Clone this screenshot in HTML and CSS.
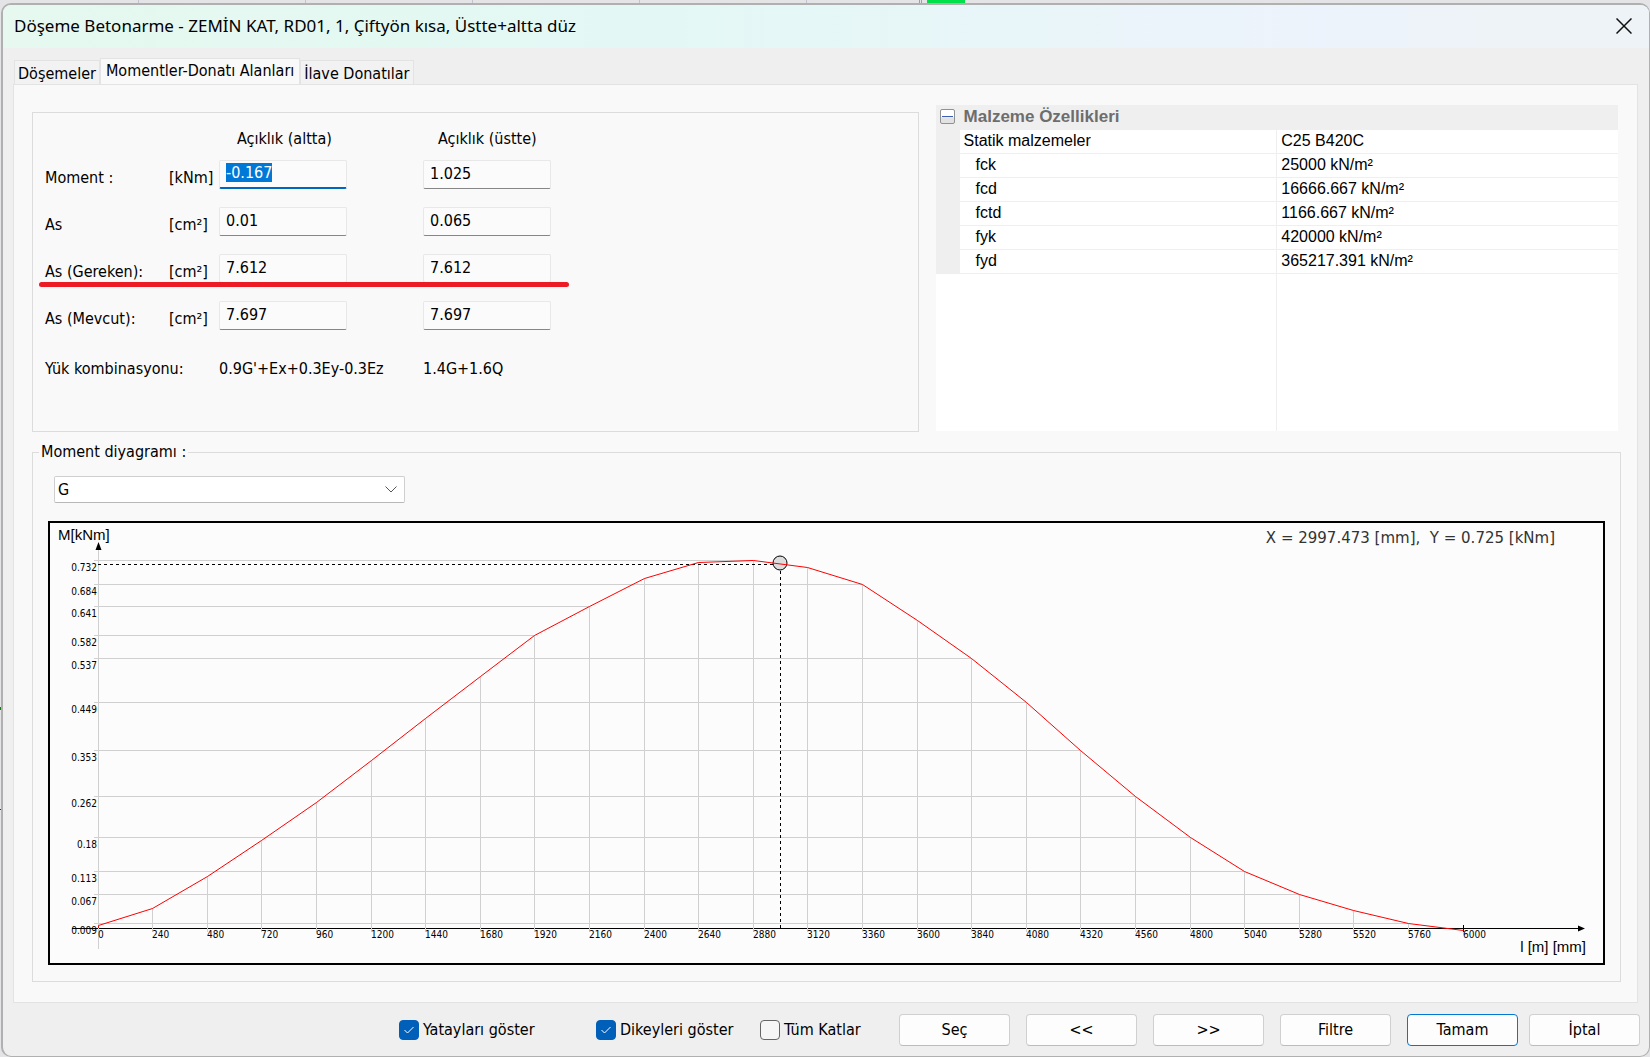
FILE: index.html
```html
<!DOCTYPE html>
<html lang="tr">
<head>
    <meta charset="utf-8">
    <title>Döşeme Betonarme</title>
    <link rel="stylesheet" href="styles.css">
</head>
<body>

<div class="dialog">
    <div class="titlebar">
        <h1>Döşeme Betonarme - ZEMİN KAT, RD01, 1, Çiftyön kısa, Üstte+altta düz</h1>
        <button class="close" aria-label="Kapat">
            <svg width="16" height="16" viewBox="0 0 16 16"><path d="M0.5 0.5L15.5 15.5M15.5 0.5L0.5 15.5"/></svg>
        </button>
    </div>

    <div class="tabs" role="tablist">
        <button class="tab" role="tab">Döşemeler</button>
        <button class="tab active" role="tab" aria-selected="true">Momentler-Donatı Alanları</button>
        <button class="tab" role="tab">İlave Donatılar</button>
    </div>

    <div class="page">
        <div class="top">
            <!-- Moment ve donatı değerleri -->
            <div class="box values">
                <div class="values-row head">
                    <span class="col-altta">Açıklık (altta)</span>
                    <span class="col-ustte">Açıklık (üstte)</span>
                </div>
                <div class="values-row">
                    <label for="moment-altta">Moment :</label>
                    <span>[kNm]</span>
                    <input id="moment-altta" class="focused" type="text" value="-0.167" readonly>
                    <input type="text" value="1.025" aria-label="Moment (üstte)" readonly>
                </div>
                <div class="values-row">
                    <label for="as-altta">As</label>
                    <span>[cm²]</span>
                    <input id="as-altta" type="text" value="0.01" readonly>
                    <input type="text" value="0.065" aria-label="As (üstte)" readonly>
                </div>
                <div class="values-row marked">
                    <label for="gereken-altta">As (Gereken):</label>
                    <span>[cm²]</span>
                    <input id="gereken-altta" type="text" value="7.612" readonly>
                    <input type="text" value="7.612" aria-label="As Gereken (üstte)" readonly>
                </div>
                <div class="values-row">
                    <label for="mevcut-altta">As (Mevcut):</label>
                    <span>[cm²]</span>
                    <input id="mevcut-altta" type="text" value="7.697" readonly>
                    <input type="text" value="7.697" aria-label="As Mevcut (üstte)" readonly>
                </div>
                <div class="values-row combo">
                    <span class="combo-label">Yük kombinasyonu:</span>
                    <span>0.9G'+Ex+0.3Ey-0.3Ez</span>
                    <span>1.4G+1.6Q</span>
                </div>
            </div>

            <!-- Malzeme özellikleri -->
            <table class="props">
                <colgroup>
                    <col class="gutter">
                    <col>
                    <col class="value">
                </colgroup>
                <thead>
                <tr>
                    <th class="toggle-cell">
                        <button class="toggle" aria-label="Daralt"></button>
                    </th>
                    <th colspan="2">Malzeme Özellikleri</th>
                </tr>
                </thead>
                <tbody>
                <tr><td></td><td>Statik malzemeler</td><td>C25 B420C</td></tr>
                <tr class="sub"><td></td><td>fck</td><td>25000 kN/m²</td></tr>
                <tr class="sub"><td></td><td>fcd</td><td>16666.667 kN/m²</td></tr>
                <tr class="sub"><td></td><td>fctd</td><td>1166.667 kN/m²</td></tr>
                <tr class="sub"><td></td><td>fyk</td><td>420000 kN/m²</td></tr>
                <tr class="sub"><td></td><td>fyd</td><td>365217.391 kN/m²</td></tr>
                <tr class="rest"><td></td><td></td><td></td></tr>
                </tbody>
            </table>
        </div>

        <fieldset class="box diagram">
            <legend><label for="yukleme">Moment diyagramı :</label></legend>
            <select id="yukleme">
                <option>G</option>
            </select>

            <svg class="chart" viewBox="0 0 1553 440">
                <!-- yataylar -->
                <path class="grid" d="M44 37.5H703M44 61.5H812M44 83.5H539M44 112.5H484M44 135.5H921M44 179.5H976M44 227.5H1030M44 273.5H1085M44 314.5H1140M44 348.5H1194M44 371.5H1249M44 400.5H1358"/>
                <path class="axis" d="M22 405.5H1530"/>
                <!-- dikeyler -->
                <path class="grid" d="M48.5 26V426M102.5 385V409M157.5 353V409M211.5 317V409M266.5 279V409M321.5 237V409M375.5 195V409M430.5 153V409M484.5 112V409M539.5 83V409M594.5 55V409M648.5 39V409M703.5 37V409M757.5 44V409M812.5 61V409M867.5 97V409M921.5 135V409M976.5 179V409M1030.5 227V409M1085.5 273V409M1140.5 314V409M1194.5 348V409M1249.5 371V409M1303.5 387V409M1358.5 400V409"/>
                <path class="axis" d="M1413.5 402V409"/>
                <path class="arrow" d="M48.5 19L51.5 27H45.5ZM1535 405.5L1528 402.5V408.5Z"/>

                <!-- imleç -->
                <path class="cursor" d="M48 41.5H723M730.5 48V405"/>
                <circle class="marker" cx="730" cy="40" r="7"/>
                <path class="curve" d="M48.5 405V402.5L102.5 385.5L157.5 353.5L211.5 317.5L266.5 279.5L321.5 237.5L375.5 195.5L430.5 153.5L484.5 112.5L539.5 83.5L594.5 55.5L648.5 39.5L703.5 37.5L757.5 44.5L812.5 61.5L867.5 97.5L921.5 135.5L976.5 179.5L1030.5 227.5L1085.5 273.5L1140.5 314.5L1194.5 348.5L1249.5 371.5L1303.5 387.5L1358.5 400.5L1413.5 407.5"/>

                <g class="ticks y">
                    <text x="47" y="48">0.732</text>
                    <text x="47" y="72">0.684</text>
                    <text x="47" y="94">0.641</text>
                    <text x="47" y="123">0.582</text>
                    <text x="47" y="146">0.537</text>
                    <text x="47" y="190">0.449</text>
                    <text x="47" y="238">0.353</text>
                    <text x="47" y="284">0.262</text>
                    <text x="47" y="325">0.18</text>
                    <text x="47" y="359">0.113</text>
                    <text x="47" y="382">0.067</text>
                    <text x="47" y="411">0.009</text>
                </g>
                <g class="ticks">
                    <text x="48" y="415">0</text>
                    <text x="102" y="415">240</text>
                    <text x="157" y="415">480</text>
                    <text x="211" y="415">720</text>
                    <text x="266" y="415">960</text>
                    <text x="321" y="415">1200</text>
                    <text x="375" y="415">1440</text>
                    <text x="430" y="415">1680</text>
                    <text x="484" y="415">1920</text>
                    <text x="539" y="415">2160</text>
                    <text x="594" y="415">2400</text>
                    <text x="648" y="415">2640</text>
                    <text x="703" y="415">2880</text>
                    <text x="757" y="415">3120</text>
                    <text x="812" y="415">3360</text>
                    <text x="867" y="415">3600</text>
                    <text x="921" y="415">3840</text>
                    <text x="976" y="415">4080</text>
                    <text x="1030" y="415">4320</text>
                    <text x="1085" y="415">4560</text>
                    <text x="1140" y="415">4800</text>
                    <text x="1194" y="415">5040</text>
                    <text x="1249" y="415">5280</text>
                    <text x="1303" y="415">5520</text>
                    <text x="1358" y="415">5760</text>
                    <text x="1413" y="415">6000</text>
                </g>
                <text class="unit" x="8" y="17">M[kNm]</text>
                <text class="unit end" x="1536" y="429">l [m] [mm]</text>
                <text class="readout end" x="1505" y="20">X = 2997.473 [mm],&nbsp; Y = 0.725 [kNm]</text>
            </svg>
        </fieldset>
    </div>

    <div class="footer">
        <div class="checks">
            <label><input type="checkbox" checked>Yatayları göster</label>
            <label><input type="checkbox" checked>Dikeyleri göster</label>
            <label><input type="checkbox">Tüm Katlar</label>
        </div>
        <div class="buttons">
            <button class="btn">Seç</button>
            <button class="btn">&lt;&lt;</button>
            <button class="btn">&gt;&gt;</button>
            <button class="btn">Filtre</button>
            <div class="confirm">
                <button class="btn default">Tamam</button>
                <button class="btn">İptal</button>
            </div>
        </div>
    </div>
</div>

<script>
    // açılışta ilk alan seçili gelir
    document.getElementById('moment-altta').select();
</script>

</body>
</html>
```

FILE: styles.css
```css
* {
    box-sizing: border-box;
}

/* arkada kalan çizim penceresi dialogun kenarlarından görünür */
body {
    margin: 0;
    min-height: 100vh;
    display: flex;
    padding: 3px 0 0 1px;
    background:
        linear-gradient(#00e04b, #00e04b) 927px 0 / 38px 5px no-repeat,
        linear-gradient(#9a9fb0, #9a9fb0) 919px 0 / 1px 5px no-repeat,
        linear-gradient(#9a9fb0, #9a9fb0) 921px 0 / 1px 5px no-repeat,
        linear-gradient(#1a7a1a, #1a7a1a) 0 707px / 2px 3px no-repeat,
        linear-gradient(#2a2a80, #2a2a80) 0 809px / 2px 1px no-repeat,
        repeating-linear-gradient(90deg, transparent 0 138px, #c3c3cf 138px 139px, transparent 139px 167px) 0 0 / 900px 5px no-repeat,
        #e4e4e6;
    font-family: "DejaVu Sans Condensed", "Noto Sans", sans-serif;
    font-size: 16px;
    line-height: 20px;
    color: #000;
}

button, input, select {
    font: inherit;
    color: inherit;
}

.dialog {
    flex: 1;
    display: flex;
    flex-direction: column;
    border: 2px solid #b0b0b0;
    border-right-width: 1px;
    border-bottom-width: 1px;
    border-radius: 10px;
    background: #efefef;
    overflow: hidden;
}

.titlebar {
    display: flex;
    align-items: center;
    justify-content: space-between;
    height: 43px;
    padding: 0 17px 2px 11px;
    background: linear-gradient(90deg, #e6f8ef 0%, #e3f8f5 40%, #edf3fc 80%, #eef3f8 90%);
}

.titlebar h1 {
    margin: 0;
    font-family: "Noto Sans", sans-serif;
    font-size: 17px;
    font-weight: normal;
}

.close {
    display: flex;
    padding: 0;
    border: 0;
    background: none;
}

.close svg {
    fill: none;
    stroke: #111;
    stroke-width: 1.5;
}

/* sekmeler */
.tabs {
    display: flex;
    align-items: flex-end;
    padding: 10px 0 0 11px;
}

.tab {
    height: 24px;
    padding: 2px 3px 0;
    border: 1px solid #e3e3e3;
    border-bottom: 0;
    background: #f2f2f2;
    white-space: nowrap;
}

.tab.active {
    height: 27px;
    margin-bottom: -1px;
    padding: 0 5px 2px;
    background: #f9f9f9;
}

.page {
    flex: 1;
    margin: 0 11px 0 10px;
    padding: 20px 16px 18px 18px;
    border: 1px solid #e3e3e3;
    background: #f9f9f9;
}

.box {
    border: 1px solid #dcdcdc;
}

.top {
    display: grid;
    grid-template-columns: 886fr 682fr;
    gap: 17px;
    padding-right: 3px;
}

/* değer tablosu */
.values {
    display: flex;
    flex-direction: column;
    gap: 18px;
    height: 320px;
    margin-top: 7px;
    padding: 16px 12px;
}

.values-row {
    display: grid;
    grid-template-columns: 124px 50px 204px 128px;
    align-items: end;
    height: 29px;
}

.values-row.head {
    height: 20px;
    margin-bottom: -7px;
}

.head .col-altta {
    grid-column: 3;
    padding-left: 18px;
}

.head .col-ustte {
    grid-column: 4;
    padding-left: 15px;
}

.values-row label,
.values-row span {
    padding-bottom: 1px;
    white-space: nowrap;
}

.values-row input {
    width: 128px;
    height: 29px;
    padding: 0 6px 3px;
    border: 1px solid #e8e8e8;
    border-bottom-color: #868686;
    border-radius: 2px;
    background: #fbfbfb;
    outline: none;
}

.values-row input.focused {
    border-bottom: 2px solid #0067c0;
}

.values-row input::selection {
    background: #0078d7;
    color: #fff;
}

.values-row.marked {
    position: relative;
}

/* kırmızı vurgu çizgisi */
.values-row.marked::after {
    content: "";
    position: absolute;
    left: -6px;
    bottom: -4px;
    width: 530px;
    height: 5px;
    border-radius: 3px;
    background: #ed1c24;
}

.values-row.combo {
    margin-top: 3px;
}

.values-row.combo .combo-label {
    grid-column: 1 / 3;
}

/* özellik listesi */
.props {
    width: 100%;
    height: 326px;
    table-layout: fixed;
    border-collapse: collapse;
    background: #fff;
    font-family: "Liberation Sans", Arial, sans-serif;
    font-size: 16px;
}

.props .gutter {
    width: 24px;
}

.props .value {
    width: 50%;
}

.props th,
.props td {
    height: 24px;
    padding: 0 4px;
    text-align: left;
    border-bottom: 1px solid #efefef;
    line-height: 22px;
}

.props th {
    background: #efefef;
    color: #6d6d6d;
    font-size: 17px;
}

.props td:first-child {
    background: #efefef;
}

.props td:last-child {
    border-left: 1px solid #efefef;
}

.props .sub td:nth-child(2) {
    padding-left: 16px;
}

.props .rest td {
    height: auto;
    border-bottom: 0;
}

.props .rest td:first-child {
    background: #fff;
}

.toggle {
    display: block;
    width: 15px;
    height: 15px;
    padding: 0;
    border: 1px solid #919191;
    border-radius: 2px;
    background: linear-gradient(#3c5fb4, #3c5fb4) center / 11px 1px no-repeat, linear-gradient(#fff 50%, #e2e2e2 60%);
}

/* moment diyagramı */
.diagram {
    margin: 10px 0 0;
    padding: 14px 15px 16px;
    min-width: 0;
}

.diagram legend {
    margin-left: -9px;
    padding: 0 2px;
}

.diagram select {
    display: block;
    width: 351px;
    height: 27px;
    margin: 0 0 18px 6px;
    padding: 0 3px;
    border: 1px solid #cfcfcf;
    border-bottom-color: #b8b8b8;
    border-radius: 2px;
    appearance: none;
    background: url("data:image/svg+xml,%3Csvg xmlns='http://www.w3.org/2000/svg' width='12' height='7' fill='none' stroke='%23555'%3E%3Cpath d='M.5.5L6 6L11.5.5'/%3E%3C/svg%3E") right 7px center no-repeat #fff;
}

.chart {
    display: block;
    width: 100%;
    height: auto;
    border: 2px solid #000;
    background: #fcfcfc;
}

.chart .grid {
    fill: none;
    stroke: #d0d0d0;
}

.chart .axis {
    fill: none;
    stroke: #000;
}

.chart .curve {
    fill: none;
    stroke: #f00;
}

.chart .cursor {
    fill: none;
    stroke: #000;
    stroke-dasharray: 3 3;
}

.chart .marker {
    fill: #ddd;
    stroke: #000;
}

.chart .ticks {
    font-size: 10px;
}

.chart .ticks.y,
.chart .end {
    text-anchor: end;
}

.chart .unit {
    font-family: "Liberation Sans", Arial, sans-serif;
    font-size: 15px;
}

.chart .readout {
    font-family: "DejaVu Sans", sans-serif;
    font-size: 15px;
    fill: #333;
}

/* alt çubuk */
.footer {
    display: flex;
    justify-content: flex-end;
    align-items: center;
    padding: 11px 9px 10px;
}

.checks {
    display: grid;
    grid-template-columns: 197px 164px 139px;
}

.checks label {
    display: flex;
    align-items: center;
    gap: 4px;
    white-space: nowrap;
}

.checks input {
    appearance: none;
    width: 20px;
    height: 20px;
    margin: 0;
    border: 1px solid #666;
    border-radius: 4px;
    background: #f6f6f6;
}

.checks input:checked {
    border-color: #005fb8;
    background: url("data:image/svg+xml,%3Csvg xmlns='http://www.w3.org/2000/svg' width='10' height='8' fill='none' stroke='%23fff'%3E%3Cpath d='M.5 4L3.5 7L9.5 1'/%3E%3C/svg%3E") center no-repeat #005fb8;
}

.buttons {
    display: flex;
    gap: 16px;
}

.confirm {
    display: flex;
    gap: 11px;
}

.btn {
    width: 111px;
    height: 32px;
    padding: 0;
    border: 1px solid #d0d0d0;
    border-bottom-color: #bcbcbc;
    border-radius: 4px;
    background: #fdfdfd;
}

.btn.default {
    border-color: #0078d4;
}
```
